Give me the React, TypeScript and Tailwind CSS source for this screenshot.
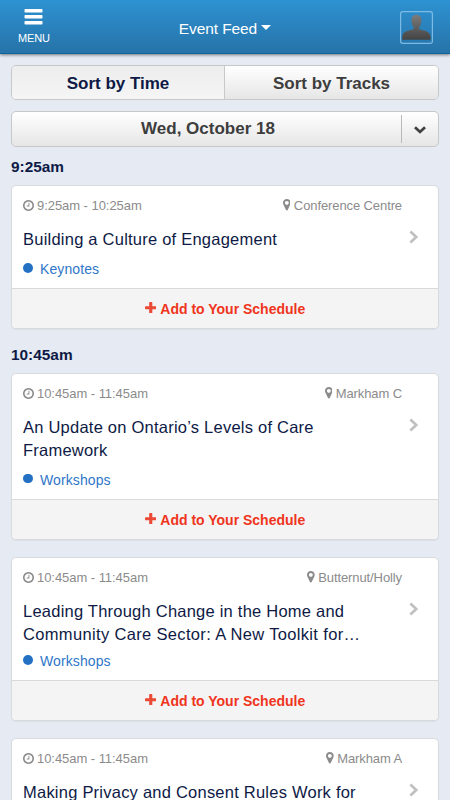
import React from "react";

const ClockIcon = () => (
  <svg className="mb-[2px] h-[11px] w-[11px] shrink-0" viewBox="0 128 1536 1536" fill="currentColor">
    <path d="M896 544v448q0 14-9 23t-23 9h-320q-14 0-23-9t-9-23v-64q0-14 9-23t23-9h224v-352q0-14 9-23t23-9h64q14 0 23 9t9 23zm416 352q0-148-73-273t-198-198-273-73-273 73-198 198-73 273 73 273 198 198 273 73 273-73 198-198 73-273zm224 0q0 209-103 385.5t-279.5 279.5-385.5 103-385.5-103-279.5-279.5-103-385.5 103-385.5 279.5-279.5 385.5-103 385.5 103 279.5 279.5 103 385.5z" />
  </svg>
);

const PinIcon = () => (
  <svg className="mb-[2px] h-[11.5px] w-[7.7px] shrink-0" viewBox="0 128 1024 1536" fill="currentColor">
    <path d="M768 640q0-106-75-181t-181-75-181 75-75 181 75 181 181 75 181-75 75-181zm256 0q0 109-33 179l-364 774q-16 33-47.5 52t-67.5 19-67.5-19-46.5-52l-365-774q-33-70-33-179 0-212 150-362t362-150 362 150 150 362z" />
  </svg>
);

const PlusIcon = () => (
  <svg className="mb-[3px] h-[11.5px] w-[11.5px] shrink-0" viewBox="0 128 1408 1408" fill="#ea4a36">
    <path d="M1408 736v192q0 40-28 68t-68 28h-416v416q0 40-28 68t-68 28h-192q-40 0-68-28t-28-68v-416h-416q-40 0-68-28t-28-68v-192q0-40 28-68t68-28h416v-416q0-40 28-68t68-28h192q40 0 68 28t28 68v416h416q40 0 68 28t28 68z" />
  </svg>
);

const ChevronRight = () => (
  <svg className="-mr-px mt-[2px] h-3.5 w-[10px] shrink-0" viewBox="0 0 10 14" fill="none" stroke="#c0c0c0" strokeWidth="2.7">
    <path d="M1.4 1.500 7.200 7 1.4 12.500" />
  </svg>
);

type Session = {
  time: string;
  place: string;
  lines: string[];
  track: string;
  body: string;
  trackGap: string;
};

function SessionCard({ time, place, lines, track, body, trackGap }: Session) {
  return (
    <article className="overflow-hidden rounded-[5px] border border-[#d9dade] bg-white shadow-[0_1px_1px_rgba(0,0,0,0.05)]">
      <div className={`${body} border-b border-[#d9d9d9] pl-[11px] pr-5 pt-3`}>
        <div className="flex h-4 items-center justify-between pr-4 text-[13px] leading-4 text-[#8b8b8b]">
          <span className="flex items-center gap-[3px]"><ClockIcon /><span className="tracking-[-0.05px]">{time}</span></span>
          <span className="flex items-center gap-[3.5px]"><PinIcon /><span className="tracking-[-0.1px]">{place}</span></span>
        </div>
        <div className="mt-[14px] flex justify-between">
          <h3 className="text-[16.5px] leading-[23px] tracking-[0.23px] text-[#0e1a45]">
            {lines.map((line) => (
              <span
                className={`block whitespace-nowrap ${line.endsWith("…") ? "tracking-[0.34px]" : ""}`}
                key={line}
              >
                {line}
              </span>
            ))}
          </h3>
          <ChevronRight />
        </div>
        <div className={`${trackGap} flex h-4 items-center text-[14px] leading-4 text-[#2f76c8]`}>
          <span className="mb-[2px] mr-[7.5px] h-[9.5px] w-[9.5px] rounded-full bg-[#2470c2]" />
          <span className="tracking-[0.1px]">{track}</span>
        </div>
      </div>
      <button className="flex h-[39px] w-full items-center justify-center gap-[4px] bg-[#f4f4f4] pt-px text-[14px] font-bold text-[#ef3420]">
        <PlusIcon />
        <span>Add to Your Schedule</span>
      </button>
    </article>
  );
}

export default function App() {
  return (
    <div className="h-[800px] w-[450px] overflow-hidden bg-[#e5eaf3] font-['Liberation_Sans',Arial,sans-serif]">
      <header className="relative grid h-[54px] grid-cols-3 border-b border-[#0c639d] bg-gradient-to-b from-[#2e92d2] to-[#2673a8] text-white shadow-[0_1px_3px_rgba(0,0,0,0.5)]">
        <div className="flex flex-col items-start pl-[18px] pt-[9px]">
          <svg className="ml-[6px] h-4 w-[19px]" viewBox="0 0 19 16" fill="white">
            <rect y="0" x="0.5" width="18" height="3.6" rx="0.8" />
            <rect y="6" x="0.5" width="18" height="3.6" rx="0.8" />
            <rect y="12" x="0.5" width="18" height="3.6" rx="0.8" />
          </svg>
          <span className="mt-[7px] text-[11px] leading-[13px] tracking-[-0.15px]">MENU</span>
        </div>
        <div className="flex items-center justify-center gap-[4px] pt-[4px] text-[15.5px]">
          <span className="whitespace-nowrap tracking-[-0.1px]">Event Feed</span>
          <span className="mb-[3px] border-x-[5px] border-t-[5px] border-x-transparent border-t-white" />
        </div>
        <div className="flex items-center justify-end pr-[17px] pt-px">
          <svg className="h-[33px] w-[33px]" viewBox="0 0 33 33">
            <defs>
              <linearGradient id="person" x1="0" y1="0" x2="0" y2="1">
                <stop stopColor="#7c7c7c" />
                <stop offset="1" stopColor="#434343" />
              </linearGradient>
            </defs>
            <rect x="0.6" y="0.6" width="31.8" height="31.8" rx="2.2" fill="none" stroke="#7cbbe6" strokeWidth="1.2" />
            <path d="M16.3 3.800c-3.200 0-4.900 2.200-4.900 5.600 0 2.900.9 5.400 2.300 6.700v1.600c-1 1-2.800 1.300-4.900 1.700C4.500 20.400 2.200 22.500 2.200 26.500v2.300h28.400v-2.300c0-4-2.300-6.100-6.600-7.100-2.100-.4-3.900-.7-4.900-1.700v-1.600c1.400-1.300 2.300-3.800 2.300-6.700 0-3.400-1.900-5.600-5.100-5.600z" fill="url(#person)" />
          </svg>
        </div>
      </header>

      <main className="px-[11px] pt-[11px]">
        <div className="flex h-[35px] overflow-hidden rounded-[5px] border border-[#c8c8c8] text-[17px] font-bold">
          <button className="w-[212px] bg-gradient-to-b from-[#ededed] to-[#f5f5f5] pt-[2px] text-[#0e1a45]">Sort by Time</button>
          <button className="flex-1 border-l border-[#c8c8c8] bg-gradient-to-b from-white to-[#e6e6e6] pt-[2px] text-[#3d3d3d]">Sort by Tracks</button>
        </div>
        <button className="mt-[11px] flex h-9 w-full items-center rounded-[5px] border border-[#c8c8c8] bg-gradient-to-b from-white to-[#e6e6e6] text-[17px] font-bold text-[#3d3d3d]">
          <span className="flex-1 pl-[3px] text-center">Wed, October 18</span>
          <span className="flex h-[28px] w-[37px] items-center justify-center border-l border-[#b8b8b8]">
            <svg className="mt-[2px] h-2 w-3" viewBox="0 0 12 8" fill="none" stroke="#414141" strokeWidth="2.7">
              <path d="m1 1.200 5 4.800 5-4.800" />
            </svg>
          </span>
        </button>

        <h2 className="mb-[9px] mt-[10px] text-[15.4px] font-bold leading-[19px] text-[#0e1a45]">9:25am</h2>
        <SessionCard time="9:25am - 10:25am" place="Conference Centre" lines={["Building a Culture of Engagement"]} track="Keynotes" body="h-[103px]" trackGap="mt-[10px]" />
        <h2 className="mb-[9px] mt-4 text-[15.4px] font-bold leading-[19px] text-[#0e1a45]">10:45am</h2>
        <div className="flex flex-col gap-[17px]">
          <SessionCard time="10:45am - 11:45am" place="Markham C" lines={["An Update on Ontario’s Levels of Care", "Framework"]} track="Workshops" body="h-[126px]" trackGap="mt-[9.5px]" />
          <SessionCard time="10:45am - 11:45am" place="Butternut/Holly" lines={["Leading Through Change in the Home and", "Community Care Sector: A New Toolkit for…"]} track="Workshops" body="h-[123px]" trackGap="mt-[7px]" />
          <SessionCard time="10:45am - 11:45am" place="Markham A" lines={["Making Privacy and Consent Rules Work for"]} track="Workshops" body="h-[124px]" trackGap="mt-[9px]" />
        </div>
      </main>
    </div>
  );
}
